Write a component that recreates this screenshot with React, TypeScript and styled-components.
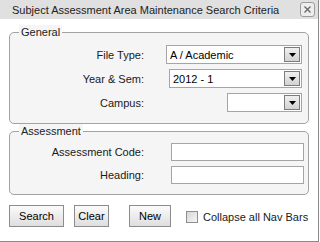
import React from 'react';
import styled, { createGlobalStyle } from 'styled-components';

const GlobalStyle = createGlobalStyle`
  html, body {
    margin: 0;
    padding: 0;
    background: #ffffff;
  }
  body {
    font-family: "Liberation Sans", Arial, sans-serif;
    font-size: 11px;
    color: #1a1a1a;
  }
`;

const StyledWindow = styled.div`
  width: 319px;
  height: 242px;
  box-sizing: border-box;
  background: #ffffff;
  border-right: 1px solid #8a8a8a;
  border-bottom: 1px solid #8a8a8a;
  display: flex;
  flex-direction: column;
`;

const StyledTitleBar = styled.div`
  height: 19px;
  flex: none;
  background: #e0e0e0;
  display: flex;
  align-items: center;
  padding: 0 3px 0 12px;
`;

const StyledTitleText = styled.div`
  flex: 1;
  font-size: 11px;
  color: #222222;
  white-space: nowrap;
`;

const StyledCloseButton = styled.div`
  width: 15px;
  height: 15px;
  box-sizing: border-box;
  border: 1px solid #9c9c9c;
  border-radius: 3px;
  background: #ededed;
  display: flex;
  align-items: center;
  justify-content: center;
`;

const StyledBody = styled.div`
  padding: 6px 9px 0 9px;
  display: flex;
  flex-direction: column;
`;

const StyledFieldset = styled.fieldset`
  margin: 0;
  min-width: 0;
  padding: 0 6px ${(props: { $bottom: number }) => props.$bottom}px 9px;
  border: 1px solid #a3a3a3;
  border-radius: 5px;
  background: #f5f5f5;
`;

const StyledLegend = styled.legend`
  padding: 0 2px;
  font-size: 11px;
  line-height: 14px;
  color: #222222;
  background: #f5f5f5;
`;

const StyledRows = styled.div<{ $top: number; $gap: number }>`
  display: grid;
  grid-template-columns: 125px 1fr;
  align-items: center;
  padding-top: ${(props) => props.$top}px;
  row-gap: ${(props) => props.$gap}px;
`;

const StyledLabel = styled.div`
  text-align: right;
  font-size: 11px;
  color: #1a1a1a;
  white-space: nowrap;
`;

const StyledSelect = styled.div<{ $width: number }>`
  justify-self: end;
  width: ${(props) => props.$width}px;
  height: 19px;
  box-sizing: border-box;
  border: 1px solid #a5a5a5;
  background: #ffffff;
  display: flex;
  align-items: center;
  padding-left: 3px;
  font-size: 11px;
  color: #000000;
`;

const StyledSelectValue = styled.span`
  flex: 1;
  white-space: nowrap;
`;

const StyledArrowButton = styled.div`
  width: 16px;
  height: 15px;
  box-sizing: border-box;
  margin-right: 1px;
  border: 1px solid #7c7c7c;
  background: linear-gradient(#f0f0f0, #d2d2d2);
  display: flex;
  align-items: center;
  justify-content: center;
`;

const StyledInput = styled.input`
  justify-self: end;
  width: 133px;
  height: 18px;
  margin: 0 -2px 0 0;
  box-sizing: border-box;
  border: 1px solid #a5a5a5;
  background: #ffffff;
  padding: 0 3px;
  font-family: inherit;
  font-size: 11px;
  outline: none;
`;

const StyledActions = styled.div`
  display: flex;
  align-items: center;
  margin-top: 10px;
`;

const StyledButton = styled.button<{ $width: number; $gap: number }>`
  width: ${(props) => props.$width}px;
  height: 22px;
  margin: 0 ${(props) => props.$gap}px 0 0;
  padding: 0;
  box-sizing: border-box;
  border: 1px solid #8c8c8c;
  border-radius: 0;
  background: linear-gradient(#fbfbfb, #dedede);
  font-family: inherit;
  font-size: 11px;
  color: #000000;
`;

const StyledCheckLabel = styled.label`
  display: flex;
  align-items: center;
  gap: 5px;
  margin-top: 2px;
  font-size: 11px;
  color: #1a1a1a;
  white-space: nowrap;
`;

const StyledCheckbox = styled.span`
  width: 12px;
  height: 12px;
  box-sizing: border-box;
  border: 1px solid #8e8e8e;
  background: linear-gradient(135deg, #d6d6d6, #f6f6f6);
`;

const ArrowIcon = () => (
  <svg width="7" height="4" viewBox="0 0 7 4">
    <path d="M0 0 H7 L3.5 4 Z" fill="#000" />
  </svg>
);

const CloseIcon = () => (
  <svg width="7" height="7" viewBox="0 0 7 7">
    <path d="M0.5 0.5 L6.5 6.5 M6.5 0.5 L0.5 6.5" stroke="#6a6a6a" strokeWidth="1.4" />
  </svg>
);

const Select = ({ value, width }: { value: string; width: number }) => (
  <StyledSelect $width={width}>
    <StyledSelectValue>{value}</StyledSelectValue>
    <StyledArrowButton>
      <ArrowIcon />
    </StyledArrowButton>
  </StyledSelect>
);

const App = () => {
  return (
    <>
      <GlobalStyle />
      <StyledWindow>
        <StyledTitleBar>
          <StyledTitleText>Subject Assessment Area Maintenance Search Criteria</StyledTitleText>
          <StyledCloseButton>
            <CloseIcon />
          </StyledCloseButton>
        </StyledTitleBar>
        <StyledBody>
          <StyledFieldset $bottom={11}>
            <StyledLegend>General</StyledLegend>
            <StyledRows $top={6} $gap={5}>
              <StyledLabel>File Type:</StyledLabel>
              <Select value="A / Academic" width={136} />
              <StyledLabel>Year &amp; Sem:</StyledLabel>
              <Select value="2012 - 1" width={133} />
              <StyledLabel>Campus:</StyledLabel>
              <Select value="" width={75} />
            </StyledRows>
          </StyledFieldset>
          <StyledFieldset $bottom={10}>
            <StyledLegend>Assessment</StyledLegend>
            <StyledRows $top={5} $gap={5}>
              <StyledLabel>Assessment Code:</StyledLabel>
              <StyledInput />
              <StyledLabel>Heading:</StyledLabel>
              <StyledInput />
            </StyledRows>
          </StyledFieldset>
          <StyledActions>
            <StyledButton $width={55} $gap={10}>Search</StyledButton>
            <StyledButton $width={35} $gap={20}>Clear</StyledButton>
            <StyledButton $width={42} $gap={15}>New</StyledButton>
            <StyledCheckLabel>
              <StyledCheckbox />
              Collapse all Nav Bars
            </StyledCheckLabel>
          </StyledActions>
        </StyledBody>
      </StyledWindow>
    </>
  );
};

export default App;
